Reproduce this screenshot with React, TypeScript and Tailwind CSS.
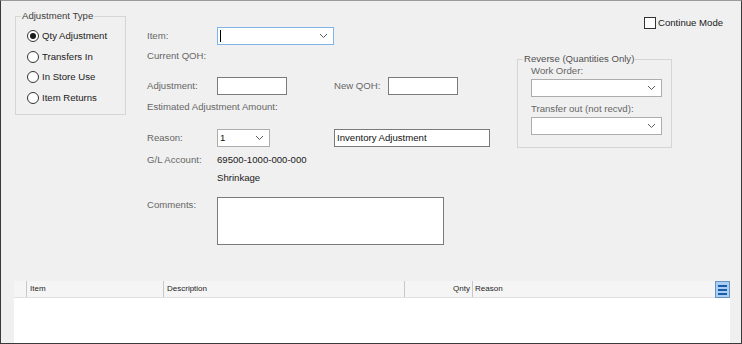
import React from "react";

const Chevron = () => (
  <svg width="9" height="6" viewBox="0 0 9 6" className="shrink-0">
    <path d="M1 1l3.5 3.5L8 1" fill="none" stroke="#5a5a5a" strokeWidth="1" />
  </svg>
);

function Combo({ w, value, focused }: { w: string; value?: string; focused?: boolean }) {
  return (
    <div
      className={`${w} h-[18px] bg-white border flex items-center justify-between pl-[2px] pr-[5px] ${
        focused ? "border-[#7eb4ea]" : "border-[#adadad]"
      }`}
    >
      {focused ? (
        <span className="w-px h-[12px] bg-black" />
      ) : (
        <span className="text-[#111]">{value}</span>
      )}
      <Chevron />
    </div>
  );
}

function TextBox({ w, value }: { w: string; value?: string }) {
  return (
    <div className={`${w} h-[18px] bg-white border border-[#7a7a7a] flex items-center pl-[2px] text-[#111]`}>
      {value}
    </div>
  );
}

function Radio({ label, checked }: { label: string; checked?: boolean }) {
  return (
    <div className="h-[20.5px] flex items-center">
      <span className="w-[12px] h-[12px] rounded-full border border-[#333] bg-white flex items-center justify-center">
        {checked && <span className="w-[6px] h-[6px] rounded-full bg-[#1a1a1a]" />}
      </span>
      <span className="ml-[3px] text-[#1a1a1a]">{label}</span>
    </div>
  );
}

const Label = ({ children, w = "w-[70px]" }: { children: React.ReactNode; w?: string }) => (
  <span className={`${w} shrink-0 text-[#666]`}>{children}</span>
);

export default function App() {
  return (
    <div className="w-[742px] h-[344px] bg-[#f0f0f0] border border-[#3a3a3a] border-t-[#9a9a9a] flex flex-col font-['Liberation_Sans',Arial,sans-serif] text-[9.6px] leading-[12px]">
      <div className="h-[280px] flex items-start shrink-0">
        {/* Adjustment Type */}
        <fieldset className="ml-[14px] mt-[9px] w-[111px] h-[105px] border border-[#d5d5d5]">
          <legend className="ml-[5px] px-[1px] leading-[12px] text-[#3c3c3c]">Adjustment Type</legend>
          <div className="flex flex-col pt-[4px] pl-[11px]">
            <Radio label="Qty Adjustment" checked />
            <Radio label="Transfers In" />
            <Radio label="In Store Use" />
            <Radio label="Item Returns" />
          </div>
        </fieldset>

        {/* Main form */}
        <div className="ml-[21px] mt-[26px] flex flex-col">
          <div className="h-[18px] flex items-center">
            <Label>Item:</Label>
            <Combo w="w-[117px]" focused />
          </div>
          <div className="h-[18px] mt-[2px] flex items-center">
            <Label w="w-auto">Current QOH:</Label>
          </div>
          <div className="h-[18px] mt-[12px] flex items-center">
            <Label>Adjustment:</Label>
            <TextBox w="w-[70px]" />
            <span className="ml-[47px] w-[54px] text-[#666]">New QOH:</span>
            <TextBox w="w-[70px]" />
          </div>
          <div className="h-[18px] mt-[3px] flex items-center">
            <Label w="w-auto">Estimated Adjustment Amount:</Label>
          </div>
          <div className="h-[18px] mt-[13px] flex items-center">
            <Label>Reason:</Label>
            <Combo w="w-[53px]" value="1" />
            <span className="w-[64px]" />
            <TextBox w="w-[156px]" value="Inventory Adjustment" />
          </div>
          <div className="h-[18px] mt-[4px] flex items-center">
            <Label>G/L Account:</Label>
            <span className="text-[#1a1a1a]">69500-1000-000-000</span>
          </div>
          <div className="h-[18px] flex items-center">
            <span className="w-[70px]" />
            <span className="text-[#1a1a1a]">Shrinkage</span>
          </div>
          <div className="mt-[10px] flex items-start">
            <span className="w-[70px] pt-[2px] text-[#666]">Comments:</span>
            <div className="w-[227px] h-[48px] bg-white border border-[#7a7a7a]" />
          </div>
        </div>

        {/* Right side */}
        <div className="ml-[27px] flex flex-col">
          <div className="mt-[16px] pl-[127px] h-[12px] flex items-center">
            <span className="w-[12px] h-[12px] border border-[#333] bg-white" />
            <span className="ml-[2px] text-[#1a1a1a] whitespace-nowrap">Continue Mode</span>
          </div>
          <fieldset className="mt-[24px] w-[155px] h-[95px] border border-[#d5d5d5]">
            <legend className="ml-[5px] px-[1px] leading-[12px] text-[#505050]">Reverse (Quantities Only)</legend>
            <div className="pl-[13px]">
              <div className="text-[#666]">Work Order:</div>
              <div className="mt-[2px]">
                <Combo w="w-[131px]" />
              </div>
              <div className="mt-[6px] text-[#666]">Transfer out (not recvd):</div>
              <div className="mt-[2px]">
                <Combo w="w-[131px]" />
              </div>
            </div>
          </fieldset>
        </div>
      </div>

      {/* Grid */}
      <div className="flex-1 ml-[13px] mr-[11px] bg-white flex flex-col">
        <div className="h-[17px] bg-[#f5f5f5] border-b border-[#e0e0e0] flex items-stretch text-[8px] text-[#1e1e1e]">
          <div className="w-[13px] border-r border-[#c8c8c8]" />
          <div className="w-[137px] border-r border-[#c8c8c8] pl-[3px] flex items-center">Item</div>
          <div className="w-[241px] border-r border-[#c8c8c8] pl-[3px] flex items-center">Description</div>
          <div className="w-[68px] border-r border-[#c8c8c8] pr-[2px] flex items-center justify-end">Qnty</div>
          <div className="flex-1 pl-[2px] flex items-center">Reason</div>
          <div className="w-[15px] h-[17px] bg-[#a8d0f5] border border-[#6d94c0] flex flex-col items-center justify-center gap-[2px]">
            <span className="w-[9px] h-[2px] bg-[#1f5aa6]" />
            <span className="w-[9px] h-[2px] bg-[#1f5aa6]" />
            <span className="w-[9px] h-[2px] bg-[#1f5aa6]" />
          </div>
        </div>
      </div>
    </div>
  );
}
